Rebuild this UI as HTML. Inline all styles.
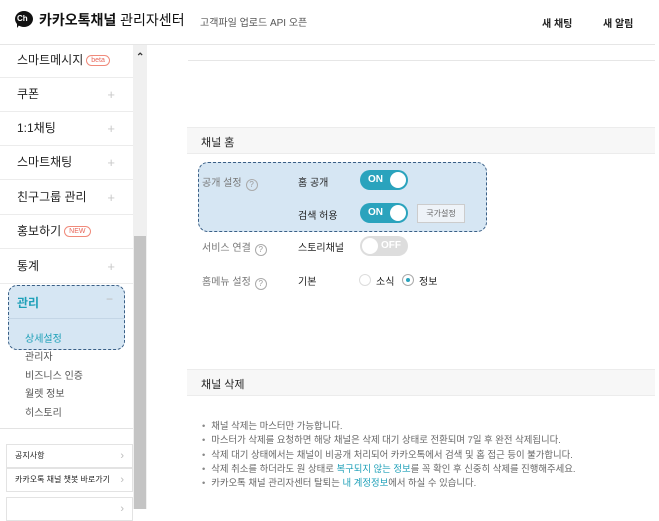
<!DOCTYPE html>
<html><head><meta charset="utf-8"><style>
*{margin:0;padding:0;box-sizing:border-box}
body{width:659px;height:509px;overflow:hidden;background:#fff;font-family:"Liberation Sans","Noto Sans CJK KR",sans-serif;color:#222;position:relative}
.a{position:absolute;white-space:nowrap}
.menu{position:absolute;left:0;width:133px;height:34px;border-bottom:1px solid #ececec;font-size:12px;color:#222;padding:0 0 0 17px;line-height:33px;background:#fff}
.plus{position:absolute;right:18px;top:0;color:#c8c8c8;font-size:13px;line-height:33px}
.badge{display:inline-block;border:1px solid #f08a7a;color:#e8665a;border-radius:8px;font-size:7px;padding:0 4px;line-height:9px;vertical-align:2px;margin-left:3px}
.sub{position:absolute;left:25px;font-size:10px;color:#555}
.tog{position:absolute;width:48px;height:20px;border-radius:10px;background:#2aa3bd;color:#fff;font-size:10px;font-weight:bold;padding-left:8px;line-height:20px}
.tog:after{content:"";position:absolute;right:2px;top:2px;width:16px;height:16px;border-radius:50%;background:#fff}
.lbl{position:absolute;font-size:10px;color:#777}
.q{display:inline-block;width:12px;height:12px;border:1px solid #aaa;border-radius:50%;font-size:8px;text-align:center;line-height:10px;color:#999;margin-left:4px;vertical-align:-1px}
.val{position:absolute;font-size:10px;color:#222}
.box{position:absolute;left:6px;width:127px;height:24px;border:1px solid #e3e3e3;font-size:8px;padding-left:8px;line-height:22px;color:#222;background:#fff}
.box:after{content:"›";position:absolute;right:8px;top:0;color:#bbb;font-size:11px}
li{list-style:none;font-size:9.4px;color:#666;line-height:14.3px}
li:before{content:"•";margin-right:6px;color:#888}
.bl{color:#1ea0b8}
</style></head><body>
<div class="a" style="left:15px;top:11px;width:18px;height:16px;background:#111;border-radius:50%"></div>
<div class="a" style="left:17px;top:24px;width:0;height:0;border-left:3px solid #111;border-bottom:4px solid transparent"></div>
<div class="a" style="left:17px;top:14px;font-size:8px;color:#fff;font-weight:bold">Ch</div>
<div class="a" style="left:39px;top:10px;font-size:14px;font-weight:bold;color:#111">카카오톡채널 <span style="font-weight:normal">관리자센터</span></div>
<div class="a" style="left:200px;top:14px;font-size:10px;color:#555">고객파일 업로드 API 오픈</div>
<div class="a" style="left:542px;top:15px;font-size:10px;font-weight:bold">새 채팅</div>
<div class="a" style="left:603px;top:15px;font-size:10px;font-weight:bold">새 알림</div>
<div class="a" style="left:0;top:44px;width:655px;height:1px;background:#e6e6e6"></div>
<div class="a" style="left:0;top:45px;width:133px;height:464px;background:#fff"></div>
<div class="menu" style="top:45px;height:33px;line-height:31px">스마트메시지<span class="badge">beta</span></div>
<div class="menu" style="top:78px">쿠폰<span class="plus">+</span></div>
<div class="menu" style="top:112px">1:1채팅<span class="plus">+</span></div>
<div class="menu" style="top:146px">스마트채팅<span class="plus">+</span></div>
<div class="menu" style="top:181px">친구그룹 관리<span class="plus">+</span></div>
<div class="menu" style="top:215px">홍보하기<span class="badge">NEW</span></div>
<div class="menu" style="top:250px">통계<span class="plus">+</span></div>
<div class="a" style="left:8px;top:285px;width:117px;height:65px;background:#d6e6f3;border:1px dashed #3a5f86;border-radius:9px"></div>
<div class="a" style="left:17px;top:294px;font-size:12px;font-weight:bold;color:#1ea0b8">관리</div>
<div class="a" style="left:106px;top:292px;color:#bbb;font-size:12px">−</div>
<div class="a" style="left:8px;top:318px;width:117px;height:1px;background:#c4d6e6"></div>
<div class="sub" style="top:330px;color:#1ea0b8">상세설정</div>
<div class="sub" style="top:348px">관리자</div>
<div class="sub" style="top:367px">비즈니스 인증</div>
<div class="sub" style="top:385px">월렛 정보</div>
<div class="sub" style="top:404px">히스토리</div>
<div class="a" style="left:0;top:428px;width:133px;height:1px;background:#e3e3e3"></div>
<div class="box" style="top:444px">공지사항</div>
<div class="box" style="top:468px">카카오톡 채널 챗봇 바로가기</div>
<div class="box" style="top:497px"></div>
<div class="a" style="left:133px;top:45px;width:14px;height:464px;background:#f0f0f0"></div>
<div class="a" style="left:134px;top:236px;width:12px;height:273px;background:#c4c4c4"></div>
<div class="a" style="left:136px;top:52px;font-size:10px;color:#333;font-weight:bold">&#8963;</div>
<div class="a" style="left:188px;top:60px;width:467px;height:1px;background:#e6e6e6"></div>
<div class="a" style="left:187px;top:127px;width:468px;height:27px;background:#f7f7f7;border-top:1px solid #ececec;border-bottom:1px solid #ececec"></div>
<div class="a" style="left:201px;top:134px;font-size:11px;color:#222">채널 홈</div>
<div class="a" style="left:198px;top:162px;width:289px;height:70px;background:#d6e6f3;border:1px dashed #3a5f86;border-radius:10px"></div>
<div class="lbl" style="left:202px;top:174px">공개 설정<span class="q">?</span></div>
<div class="val" style="left:298px;top:174px">홈 공개</div>
<div class="tog" style="left:360px;top:170px">ON</div>
<div class="val" style="left:298px;top:207px">검색 허용</div>
<div class="tog" style="left:360px;top:203px">ON</div>
<div class="a" style="left:417px;top:204px;width:48px;height:19px;border:1px solid #ccc;background:#eef3f8;font-size:8px;color:#666;text-align:center;line-height:17px">국가설정</div>
<div class="lbl" style="left:202px;top:239px">서비스 연결<span class="q">?</span></div>
<div class="val" style="left:298px;top:239px">스토리채널</div>
<div class="a" style="left:360px;top:236px;width:48px;height:20px;border-radius:10px;background:#ddd;color:#fff;font-size:10px;font-weight:bold;padding-left:21px;line-height:20px">OFF</div>
<div class="a" style="left:362px;top:238px;width:16px;height:16px;border-radius:50%;background:#fff"></div>
<div class="lbl" style="left:202px;top:273px">홈메뉴 설정<span class="q">?</span></div>
<div class="val" style="left:298px;top:273px">기본</div>
<div class="a" style="left:359px;top:274px;width:12px;height:12px;border:1px solid #ddd;border-radius:50%"></div>
<div class="val" style="left:376px;top:273px">소식</div>
<div class="a" style="left:402px;top:274px;width:12px;height:12px;border:1px solid #aaa;border-radius:50%"></div>
<div class="a" style="left:406px;top:278px;width:4px;height:4px;border-radius:50%;background:#2aa3bd"></div>
<div class="val" style="left:419px;top:273px">정보</div>
<div class="a" style="left:187px;top:369px;width:468px;height:27px;background:#f7f7f7;border-top:1px solid #ececec;border-bottom:1px solid #ececec"></div>
<div class="a" style="left:201px;top:376px;font-size:11px;color:#222">채널 삭제</div>
<ul class="a" style="left:202px;top:419px">
<li>채널 삭제는 마스터만 가능합니다.</li>
<li>마스터가 삭제를 요청하면 해당 채널은 삭제 대기 상태로 전환되며 7일 후 완전 삭제됩니다.</li>
<li>삭제 대기 상태에서는 채널이 비공개 처리되어 카카오톡에서 검색 및 홈 접근 등이 불가합니다.</li>
<li>삭제 취소를 하더라도 원 상태로 <span class="bl">복구되지 않는 정보</span>를 꼭 확인 후 신중히 삭제를 진행해주세요.</li>
<li>카카오톡 채널 관리자센터 탈퇴는 <span class="bl">내 계정정보</span>에서 하실 수 있습니다.</li>
</ul>
</body></html>
